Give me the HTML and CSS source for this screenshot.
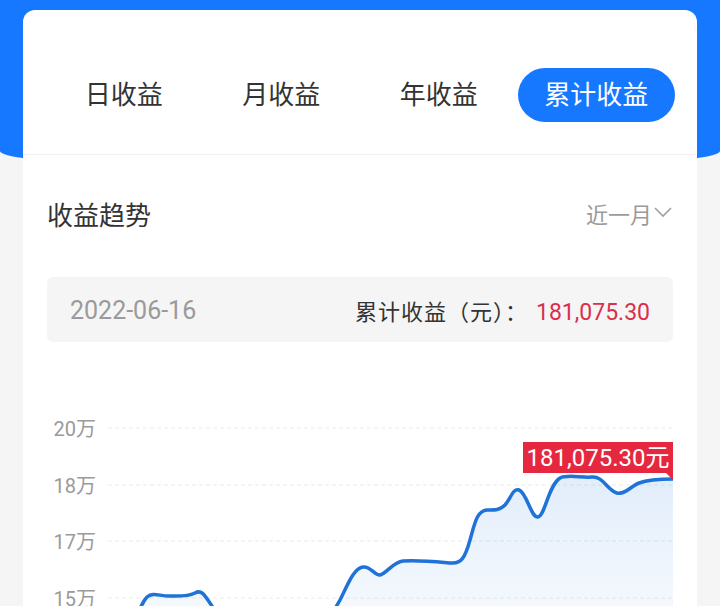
FILE: index.html
```html
<!DOCTYPE html>
<html lang="zh-CN">
<head>
    <meta charset="UTF-8">
    <meta name="viewport" content="width=device-width, initial-scale=1.0">
    <title>收益</title>
    <link rel="stylesheet" href="styles.css">
</head>
<body>
    <div class="page">
        <div class="card">
            <div class="tabs">
                <div class="tab">日收益</div>
                <div class="tab">月收益</div>
                <div class="tab">年收益</div>
                <div class="tab active">累计收益</div>
            </div>

            <div class="trend">
                <div class="trend-head">
                    <span class="trend-title">收益趋势</span>
                    <span class="range">近一月
                        <svg class="chevron" width="20" height="12" viewBox="0 0 20 12">
                            <polyline points="2,2 10,10 18,2" fill="none" stroke="#a0a0a0" stroke-width="1.6"/>
                        </svg>
                    </span>
                </div>

                <div class="summary">
                    <span class="date">2022-06-16</span>
                    <span class="total"><span class="total-label">累计收益（元）：</span><b id="total">181,075.30</b></span>
                </div>

                <svg class="chart" width="626" height="240" viewBox="0 0 626 240">
                    <defs>
                        <linearGradient id="area" x1="0" y1="0" x2="0" y2="1">
                            <stop offset="0" stop-color="#2f80e0" stop-opacity="0.14"/>
                            <stop offset="1" stop-color="#2f80e0" stop-opacity="0.03"/>
                        </linearGradient>
                    </defs>

                    <g class="grid">
                        <line x1="61" y1="28" x2="626" y2="28"/>
                        <line x1="61" y1="85" x2="626" y2="85"/>
                        <line x1="61" y1="141" x2="626" y2="141"/>
                        <line x1="61" y1="198" x2="626" y2="198"/>
                    </g>
                    <g class="axis">
                        <text x="49" y="36">20万</text>
                        <text x="49" y="93">18万</text>
                        <text x="49" y="149">17万</text>
                        <text x="49" y="206">15万</text>
                    </g>

                    <path class="area" d="M83,240 C88,225 92,205 100,197 C106,192 112,196 122,196 C132,196 140,197 148,193 C155,189 158,196 165,206 C172,220 176,232 180,240 L268,240 C275,228 283,218 293,200 C301,184 307,168 316,167 C324,166 328,176 333,175 C340,173 346,162 356,161 C372,160 392,162 404,163 C414,164 418,158 423,140 C428,122 430,111 440,110 C446,110 452,111 458,105 C464,98 466,88 472,90 C480,93 484,118 491,117 C498,116 501,86 513,78 C521,74 534,78 545,77 C556,76 560,90 570,93 C578,95 584,86 592,83 C600,80 612,79 626,79 L626,240 Z" fill="url(#area)"/>
                    <path class="line" d="M83,240 C88,225 92,205 100,197 C106,192 112,196 122,196 C132,196 140,197 148,193 C155,189 158,196 165,206 C172,220 176,232 180,240 M268,240 C275,228 283,218 293,200 C301,184 307,168 316,167 C324,166 328,176 333,175 C340,173 346,162 356,161 C372,160 392,162 404,163 C414,164 418,158 423,140 C428,122 430,111 440,110 C446,110 452,111 458,105 C464,98 466,88 472,90 C480,93 484,118 491,117 C498,116 501,86 513,78 C521,74 534,78 545,77 C556,76 560,90 570,93 C578,95 584,86 592,83 C600,80 612,79 626,79"/>

                    <rect class="tag" x="476" y="42" width="150" height="31"/>
                    <polygon class="tag" points="618,72 626,72 626,80"/>
                    <text class="tag-text" x="551" y="66">181,075.30元</text>
                </svg>
            </div>
        </div>
    </div>
</body>
</html>
```

FILE: styles.css
```css
body {
    margin: 0;
    background-color: #f5f5f5;
    font-family: Roboto, "Noto Sans CJK SC", sans-serif;
    color: #333333;
    height: 606px;
    overflow: hidden;
}

.page {
    position: relative;
    padding-top: 10px;
}

/* blue header band behind the card */
.page::before {
    content: "";
    position: absolute;
    left: 0;
    top: 0;
    width: 100%;
    height: 171px;
    background-color: #1677ff;
    border-radius: 0 0 50% 50% / 0 0 20px 20px;
}

.card {
    position: relative;
    margin: 0 23px;
    background-color: #ffffff;
    border-radius: 12px 12px 0 0;
}

.tabs {
    display: grid;
    grid-template-columns: repeat(4, 1fr);
    padding: 58px 22px 32px;
    border-bottom: 1px solid #f1f1f1;
}

.tab {
    height: 54px;
    line-height: 54px;
    text-align: center;
    font-size: 26px;
    color: #333333;
    border-radius: 27px;
}

.tab.active {
    background-color: #1677ff;
    color: #ffffff;
}

.trend {
    padding: 38px 24px 0;
}

.trend-head {
    display: flex;
    justify-content: space-between;
    align-items: center;
    height: 40px;
}

.trend-title {
    font-size: 26px;
    color: #333333;
}

.range {
    display: flex;
    align-items: center;
    font-size: 22px;
    color: #9a9a9a;
}

.chevron {
    margin-left: 1px;
    margin-top: -2px;
}

.summary {
    display: flex;
    justify-content: space-between;
    align-items: center;
    height: 65px;
    margin-top: 44px;
    padding: 0 23px;
    background-color: #f5f5f5;
    border-radius: 6px;
    font-size: 22px;
}

.date {
    color: #9a9a9a;
    font-size: 25px;
    padding-top: 2px;
}

.total {
    color: #333333;
}

.total-label {
    font-family: "Noto Sans CJK SC", sans-serif;
    letter-spacing: 1px;
    margin-right: 8px;
}

.total b {
    font-weight: normal;
    font-size: 23px;
    color: #d9304b;
}

.chart {
    display: block;
    margin-top: 58px;
}

.grid line {
    stroke: #ebebeb;
    stroke-width: 1;
    stroke-dasharray: 4 3;
}

.axis text {
    font-size: 20px;
    fill: #9a9a9a;
    text-anchor: end;
}

.line {
    fill: none;
    stroke: #1f72d8;
    stroke-width: 3.5;
    stroke-linecap: round;
    stroke-linejoin: round;
}

.tag {
    fill: #e5283f;
}

.tag-text {
    font-size: 24px;
    fill: #ffffff;
    text-anchor: middle;
}
```
